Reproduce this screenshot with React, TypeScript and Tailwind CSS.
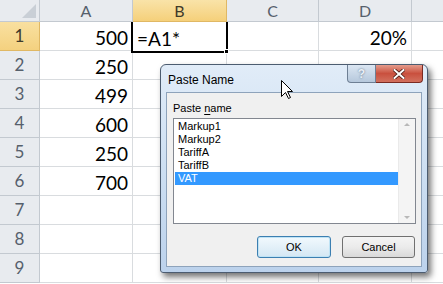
import React from "react";

const colW = ["w-[93px]", "w-[94px]", "w-[92px]", "w-[93px]", "w-[32px]"];
const colName = ["A", "B", "C", "D", ""];

const data: Record<number, string[]> = {
  1: ["500", "", "", "20%", ""],
  2: ["250", "", "", "", ""],
  3: ["499", "", "", "", ""],
  4: ["600", "", "", "", ""],
  5: ["250", "", "", "", ""],
  6: ["700", "", "", "", ""],
  7: ["", "", "", "", ""],
  8: ["", "", "", "", ""],
  9: ["", "", "", "", ""],
};

function Grid() {
  return (
    <div className="flex flex-col font-['Lato',sans-serif]">
      {/* header row */}
      <div className="flex h-[22px] shrink-0">
        <div className="relative w-[40px] shrink-0 border-r border-b border-[#c3c9d0] bg-[#e8ebef]">
          <div className="absolute right-[3px] bottom-[3px] w-0 h-0 border-l-[14px] border-l-transparent border-b-[14px] border-b-[#c9cfd6]" />
        </div>
        {colName.map((c, i) => (
          <div
            key={i}
            className={`${colW[i]} shrink-0 flex items-center justify-center border-r border-b text-[16px] ${
              i === 1
                ? "bg-gradient-to-b from-[#f9e3a8] to-[#f5d07a] border-[#e0b864] text-[#3f3a2a]"
                : "bg-[#e8ebef] border-[#c3c9d0] text-[#56606c]"
            }`}
          >
            {c}
          </div>
        ))}
      </div>
      {Object.keys(data).map((k) => {
        const r = Number(k);
        const vals = data[r];
        return (
          <div key={r} className="flex h-[29px] shrink-0">
            <div
              className={`w-[40px] shrink-0 flex items-center justify-center border-r border-b text-[17px] ${
                r === 1
                  ? "bg-gradient-to-b from-[#f9e0a0] to-[#f4d17f] border-[#e0b864] text-[#3f3a2a]"
                  : "bg-[#e8ebef] border-[#c3c9d0] text-[#56606c]"
              }`}
            >
              {r}
            </div>
            {vals.map((v, i) => (
              <div
                key={i}
                className={`${colW[i]} shrink-0 flex items-end justify-end pr-[4px] pb-[1px] border-r border-b border-[#d9dcdf] text-[19px] leading-[22px] text-black`}
              >
                {v}
              </div>
            ))}
          </div>
        );
      })}
    </div>
  );
}

function Cursor() {
  return (
    <svg
      className="absolute left-[281px] top-[80px]"
      width="13"
      height="20"
      viewBox="0 0 13 20"
    >
      <path
        d="M0.5 0.5 L0.5 16.5 L4.5 12.5 L7.5 18.5 L9.5 17.5 L6.5 11.5 L11.5 11.5 Z"
        fill="#ffffff"
        stroke="#000000"
        strokeWidth="1"
        strokeLinejoin="miter"
      />
    </svg>
  );
}

function Dialog() {
  const items = ["Markup1", "Markup2", "TariffA", "TariffB", "VAT"];
  return (
    <div className="absolute left-[160px] top-[64px] w-[268px] h-[209px] rounded-t-[6px] rounded-b-[3px] border border-[#4c5c70] bg-gradient-to-b from-[#e1ecf8] via-[#cddff2] to-[#bcd2ec] shadow-[3px_4px_6px_rgba(0,0,0,0.55)] flex flex-col font-['Liberation_Sans',Arial,sans-serif]">
      {/* title bar */}
      <div className="flex h-[27px] shrink-0">
        <div className="flex-1 pl-[7px] pt-[8px] text-[12px] text-black leading-[14px]">
          Paste Name
        </div>
        <div className="flex mr-[4px] self-start">
          <div className="w-[29px] h-[18px] flex items-center justify-center rounded-bl-[4px] border border-t-0 border-[#6e7f94] bg-gradient-to-b from-[#dbe6f2] to-[#b6c8dc] text-[12px] font-bold text-[#e9eff6] [text-shadow:0_0_2px_#55677d]">
            ?
          </div>
          <div className="w-[47px] h-[18px] flex items-center justify-center rounded-br-[4px] border border-l-0 border-t-0 border-[#7a2a22] bg-gradient-to-b from-[#e49b8c] via-[#c9503e] to-[#d2705e]">
            <svg width="12" height="10" viewBox="0 0 12 10">
              <path
                d="M1.5 1 L10.5 9 M10.5 1 L1.5 9"
                stroke="#4a1a14"
                strokeWidth="3.6"
                strokeLinecap="square"
              />
              <path
                d="M1.5 1 L10.5 9 M10.5 1 L1.5 9"
                stroke="#ffffff"
                strokeWidth="2"
                strokeLinecap="square"
              />
            </svg>
          </div>
        </div>
      </div>
      {/* client */}
      <div className="mx-[5px] mb-[5px] flex-1 border border-[#8ea3bb] bg-[#f0f0f0] flex flex-col pl-[6px] pr-[6px] pt-[8px]">
        <div className="text-[11px] leading-[14px] text-black">
          Paste <span className="underline underline-offset-[2px]">n</span>ame
        </div>
        <div className="mt-[3px] w-[243px] h-[106px] border border-[#828790] bg-white flex">
          <div className="flex-1 flex flex-col pt-[1px] pl-[1px]">
            {items.map((it) => (
              <div
                key={it}
                className={`h-[13px] leading-[13px] text-[11px] pl-[3px] ${
                  it === "VAT" ? "bg-[#3399ff] text-white" : "text-black"
                }`}
              >
                {it}
              </div>
            ))}
          </div>
          <div className="w-[17px] shrink-0 bg-[#f4f4f4] border-l border-[#eaeaea] flex flex-col justify-between items-center py-[4px]">
            <div className="w-0 h-0 border-l-[3px] border-r-[3px] border-b-[3px] border-l-transparent border-r-transparent border-b-[#b8b8b8]" />
            <div className="w-0 h-0 border-l-[3px] border-r-[3px] border-t-[3px] border-l-transparent border-r-transparent border-t-[#b8b8b8]" />
          </div>
        </div>
        <div className="mt-[12px] flex justify-end gap-[11px]">
          <div className="w-[74px] h-[22px] rounded-[3px] border border-[#3c7fb1] bg-gradient-to-b from-[#f2f9fd] to-[#d4e7f3] shadow-[inset_0_0_0_1px_#bfe3f5] flex items-center justify-center text-[11px] text-black">
            OK
          </div>
          <div className="w-[73px] h-[22px] rounded-[3px] border border-[#707070] bg-gradient-to-b from-[#f4f4f4] via-[#ebebeb] to-[#d9d9d9] flex items-center justify-center text-[11px] text-black">
            Cancel
          </div>
        </div>
      </div>
    </div>
  );
}

export default function App() {
  return (
    <div className="relative w-[443px] h-[284px] overflow-hidden bg-white">
      <Grid />
      {/* active cell */}
      <div className="absolute left-[131px] top-[22px] w-[97px] h-[31px] border-2 border-t-0 border-black flex items-end pl-[4px] pb-[1px] font-['Lato',sans-serif] text-[19px] leading-[22px] text-black bg-white">
        =A1*
      </div>
      <div className="absolute left-[224px] top-[49px] w-[5px] h-[5px] bg-black border border-white" />
      <Dialog />
      <Cursor />
    </div>
  );
}
